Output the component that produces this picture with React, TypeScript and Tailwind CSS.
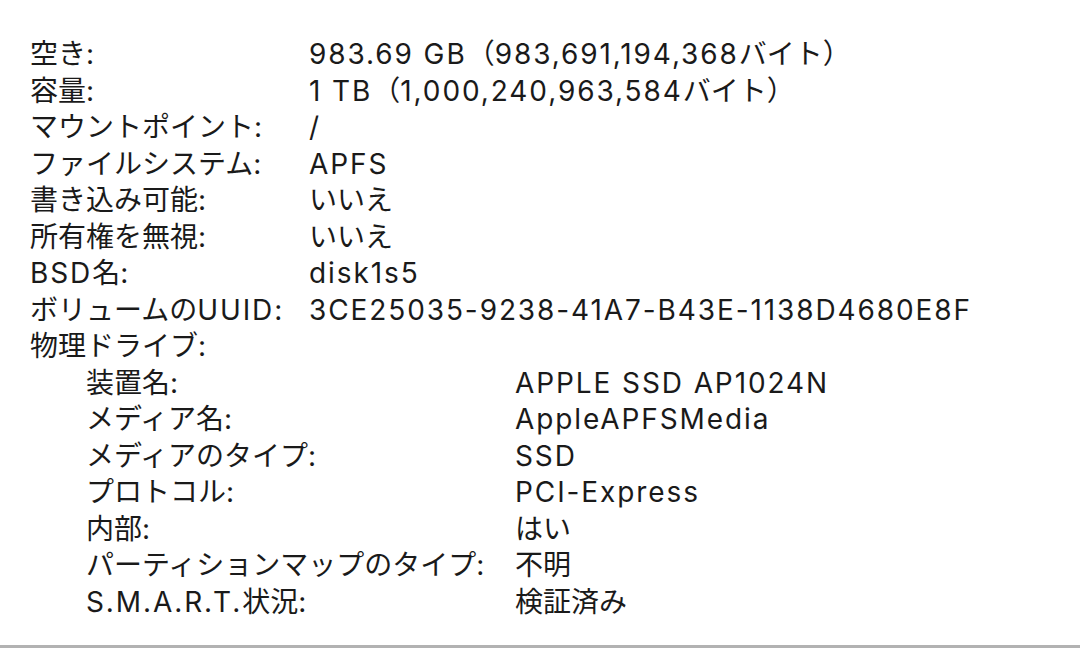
const volume = [
  { label: "空き:", value: "983.69 GB（983,691,194,368バイト）" },
  { label: "容量:", value: "1 TB（1,000,240,963,584バイト）" },
  { label: "マウントポイント:", value: "/" },
  { label: "ファイルシステム:", value: "APFS" },
  { label: "書き込み可能:", value: "いいえ" },
  { label: "所有権を無視:", value: "いいえ" },
  { label: "BSD名:", value: "disk1s5" },
  { label: "ボリュームのUUID:", value: "3CE25035-9238-41A7-B43E-1138D4680E8F" },
];

const drive = [
  { label: "装置名:", value: "APPLE SSD AP1024N" },
  { label: "メディア名:", value: "AppleAPFSMedia" },
  { label: "メディアのタイプ:", value: "SSD" },
  { label: "プロトコル:", value: "PCI-Express" },
  { label: "内部:", value: "はい" },
  { label: "パーティションマップのタイプ:", value: "不明" },
  { label: "S.M.A.R.T.状況:", value: "検証済み" },
];

// latin runs are set a little wider than Inter to match the system font
const Txt = ({ text }: { text: string }) => {
  const parts = text.split(/([A-Za-z0-9.,\-\/ ]+)/).filter(Boolean);
  return (
    <>
      {parts.map((p, i) =>
        /^[A-Za-z0-9.,\-\/ ]+$/.test(p) ? (
          <span key={i} className="tracking-[1.9px]">
            {p}
          </span>
        ) : (
          <span key={i}>{p}</span>
        )
      )}
    </>
  );
};

const Row = ({ label, value, w }: { label: string; value: string; w: string }) => (
  <div className="flex whitespace-nowrap">
    <div className={w}>
      <Txt text={label} />
    </div>
    <div>
      <Txt text={value} />
    </div>
  </div>
);

const App = () => {
  return (
    <div className="w-[1080px] h-[648px] bg-white flex flex-col text-[#1a1a1a] text-[28px] leading-[36.5px] font-['Inter','Noto_Sans_CJK_JP',sans-serif]">
      <div className="flex-1 pt-[36px] pl-[30px]">
        {volume.map((row) => (
          <Row key={row.label} label={row.label} value={row.value} w="w-[279px]" />
        ))}
        <div className="whitespace-nowrap">物理ドライブ:</div>
        <div className="pl-[56px]">
          {drive.map((row) => (
            <Row key={row.label} label={row.label} value={row.value} w="w-[429px]" />
          ))}
        </div>
      </div>
      <div className="h-[3px] bg-[#b2b2b2]" />
    </div>
  );
};

export default App;
